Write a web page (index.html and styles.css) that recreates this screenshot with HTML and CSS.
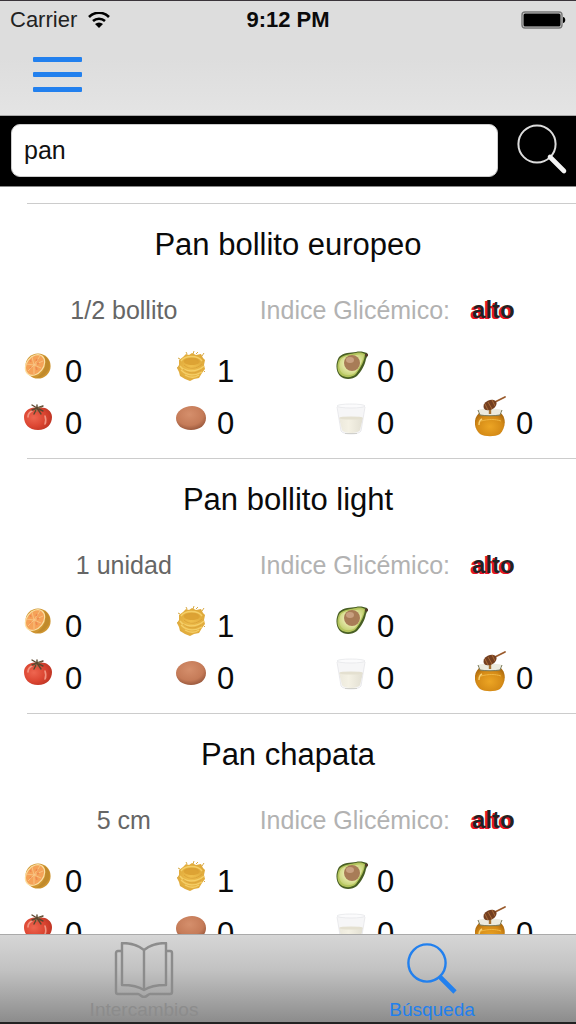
FILE: index.html
```html
<!DOCTYPE html>
<html lang="es">
<head>
    <meta charset="UTF-8">
    <meta name="viewport" content="width=device-width, initial-scale=1.0">
    <title>Búsqueda</title>
    <link rel="stylesheet" href="styles.css">
</head>
<body>

  <!-- Food icons, used by every row -->
  <svg class="sprite" aria-hidden="true">
    <defs>
      <radialGradient id="tomatoFill" cx="35%" cy="45%" r="65%">
        <stop offset="0" stop-color="#ee6650"/>
        <stop offset="0.6" stop-color="#dc4632"/>
        <stop offset="1" stop-color="#c03524"/>
      </radialGradient>
      <radialGradient id="eggFill" cx="45%" cy="35%" r="65%">
        <stop offset="0" stop-color="#d58f6c"/>
        <stop offset="0.7" stop-color="#c57b58"/>
        <stop offset="1" stop-color="#9c5a3e"/>
      </radialGradient>
      <radialGradient id="pastaFill" cx="50%" cy="50%" r="55%">
        <stop offset="0" stop-color="#f0bf4c"/>
        <stop offset="1" stop-color="#dea83a"/>
      </radialGradient>
      <radialGradient id="fleshFill" cx="50%" cy="45%" r="60%">
        <stop offset="0.4" stop-color="#eeedb4"/>
        <stop offset="1" stop-color="#c3d072"/>
      </radialGradient>
      <radialGradient id="honeyFill" cx="50%" cy="60%" r="60%">
        <stop offset="0" stop-color="#eca524"/>
        <stop offset="0.7" stop-color="#d58b17"/>
        <stop offset="1" stop-color="#ae6c10"/>
      </radialGradient>
      <linearGradient id="milkFill" x1="0" y1="0" x2="1" y2="0">
        <stop offset="0" stop-color="#ece9dc"/>
        <stop offset="0.4" stop-color="#f4f1e4"/>
        <stop offset="1" stop-color="#e2dfd2"/>
      </linearGradient>
    </defs>

    <symbol id="orange" viewBox="0 0 32 32">
      <circle cx="14" cy="15" r="12.6" fill="#cf9530"/>
      <path d="M20 5c6 3 8 11 3 16-3 4-7 6-11 6 8-5 12-13 8-22z" fill="#c08a2c"/>
      <ellipse cx="11" cy="14" rx="9" ry="12" transform="rotate(38 11 14)" fill="#fbdfa2"/>
      <ellipse cx="11" cy="14" rx="7.8" ry="10.8" transform="rotate(38 11 14)" fill="#f5a258"/>
      <path d="M10 14l6-9M10 14l9-4M10 14l7 3M10 14v9M10 14l-6 6M10 14l-8-1M10 14L8 6" stroke="#f9c98a" stroke-width="0.8" fill="none"/>
      <path d="M6 9l1 2M13 8l-1 2M6 17l1-1M13 19l-1-3M15 12l-2 1" stroke="#ee8a50" stroke-width="1.6"/>
    </symbol>

    <symbol id="tomato" viewBox="0 0 32 32">
      <path d="M14 5c5-2 14 1 14 9 0 7-5 13-14 13S0 21 0 14C0 7 8 3 14 5z" fill="url(#tomatoFill)"/>
      <path d="M4 14c0-3 2-5 4-6M21 13c1 3 1 6 0 8" stroke="#f29582" stroke-width="1.6" fill="none" stroke-linecap="round"/>
      <path d="M13 5L8 7M13 5l-3 6M13 5l4 6M13 5l6 3M13 5L8 2M13 5l6-2M13 5V2" stroke="#5c4830" stroke-width="1.4" fill="none" stroke-linecap="round"/>
      <path d="M12 6l1 3M14 5l4-1" stroke="#8f7f55" stroke-width="0.8" fill="none"/>
    </symbol>

    <symbol id="pasta" viewBox="0 0 32 32">
      <path d="M3 9l4-3 3-3 3 1 3-2 4 2 5-1 2 4 2 2-1 5 1 4-3 4-3 5-5 1-4 2-5-2-5-3-1-4-2-4 2-3z" fill="url(#pastaFill)"/>
      <path d="M8 9c4-3 12-3 15 0s-3 5-7 5-10-2-8-5z" fill="#dda334"/>
      <path d="M5 10c4-6 17-6 21 0M4 15c4 6 16 7 24 0M5 19c6 6 14 6 21 2M9 24c5 3 10 3 14 0" stroke="#f5cf68" stroke-width="1.4" fill="none"/>
      <path d="M9 10c4-3 10-3 13 0M8 14c5 5 13 4 18-1M7 18c6 5 12 5 18 1" stroke="#d89f36" stroke-width="0.8" fill="none"/>
      <path d="M4 8L2 7M11 3l-1-2M17 3l1-3M20 3l2-2M26 5l2-3M28 20l1 1M3 16l-2 1M6 24l-1 1" stroke="#d8aa45" fill="none"/>
    </symbol>

    <symbol id="egg" viewBox="0 0 32 32">
      <path d="M0 15C0 8 8 3 16 3s14 5 14 12-6 12-15 12S0 22 0 15z" fill="url(#eggFill)"/>
    </symbol>

    <symbol id="avocado" viewBox="0 0 32 32">
      <path d="M3 6c5-5 11-4 17-5 4-1 8 0 11 1 1 2 0 4-1 6-1 6-5 13-9 17-5 4-13 4-17 0S-1 13 3 6z" fill="#485e24"/>
      <path d="M4 7c5-4 11-4 16-5 4-1 7 0 9 1 0 5-4 14-9 20-4 4-11 4-15 1S0 13 4 7z" fill="#b3c45c"/>
      <path d="M5 8c5-4 10-3 15-4 3-1 6-1 8 0-1 5-4 12-9 18-4 3-10 3-13 0S2 13 5 8z" fill="url(#fleshFill)"/>
      <circle cx="16" cy="12" r="8" fill="#a87c57"/>
      <ellipse cx="14" cy="9" rx="4" ry="3" fill="#c8a080"/>
      <circle cx="30.5" cy="4" r="1.6" fill="#55392b"/>
    </symbol>

    <symbol id="milk" viewBox="0 0 32 32">
      <path d="M1 3l4 25c2 4 18 4 20 0l4-25z" fill="#f6f6f7"/>
      <path d="M3 15l3 12c2 4 16 4 18 0l3-12z" fill="url(#milkFill)"/>
      <ellipse cx="15" cy="15" rx="12" ry="1.6" fill="#e4e0d0"/>
      <ellipse cx="15" cy="3" rx="14" ry="2" fill="#fbfbfc" stroke="#e6e7ea" stroke-width="0.8"/>
      <path d="M1 4l4 24c2 4 18 4 20 0l4-24" fill="none" stroke="#e4e5e8" stroke-width="0.8"/>
      <path d="M9 30.5h12" stroke="#d0d0cc"/>
    </symbol>

    <symbol id="honey" viewBox="0 0 32 44">
      <path d="M6 17h18c8 4 7 16 1 22-5 3-15 3-20 0-7-6-7-18 1-22z" fill="url(#honeyFill)"/>
      <path d="M3 15c6-2 18-2 24 0l-2 5c-6 1-14 1-20 0z" fill="#eceade"/>
      <path d="M3 15c1 2 1 3 2 5 6 1 14 1 20 0 1-2 1-3 2-5" fill="none" stroke="#787a5c"/>
      <path d="M6 26c8-2 14-2 20 0" stroke="#f0b744" fill="none"/>
      <path d="M4 30c0-3 1-5 3-6" stroke="#f8d277" stroke-width="1.4" fill="none"/>
      <path d="M15 13v6" stroke="#a77232" stroke-width="2.4"/>
      <path d="M20 7l10-5" stroke="#9a5a2c" stroke-width="1.8" stroke-linecap="round"/>
      <ellipse cx="15" cy="10" rx="7" ry="4.8" transform="rotate(-28 15 10)" fill="#743f20"/>
      <path d="M10 9l3 6M13 7l4 7M17 5l3 6" stroke="#b5763e" stroke-width="0.8"/>
    </symbol>
  </svg>

    <div class="header">
        <div class="status">
            <div class="carrier">
                <span>Carrier</span>
                <svg class="wifi" viewBox="0 0 22 16" aria-hidden="true">
                    <path d="M1 5a14 14 0 0 1 20 0M5 9a9 9 0 0 1 12 0" fill="none" stroke="#000" stroke-width="2.6"/>
                    <path d="M7 12a6 6 0 0 1 8 0l-4 4z"/>
                </svg>
            </div>
            <div class="clock">9:12 PM</div>
            <svg class="battery" viewBox="0 0 45 18" aria-hidden="true">
                <rect x="1" y="1" width="40" height="16" rx="3" fill="#ddd" stroke="#777" stroke-width="1.4"/>
                <rect x="2.5" y="2.5" width="37" height="13" rx="1.5"/>
                <path d="M42 6c3 0 3 6 0 6z"/>
            </svg>
        </div>
        <button class="menu" type="button" aria-label="Menú">
            <span></span>
            <span></span>
            <span></span>
        </button>
    </div>

    <form class="search">
        <input type="text" value="pan" aria-label="Buscar alimento">
        <button type="button" aria-label="Buscar">
            <svg viewBox="0 0 52 52" fill="none" aria-hidden="true">
                <circle cx="21" cy="20" r="18.6" stroke="#dcdcdc" stroke-width="2"/>
                <path d="M34 33L48 47" stroke="#f4f4f4" stroke-width="4.6" stroke-linecap="round"/>
            </svg>
        </button>
    </form>

    <div class="results">
        <div class="food">
            <h2>Pan bollito europeo</h2>
            <div class="info">
                <span class="portion">1/2 bollito</span>
                <span class="label">Indice Glicémico:</span>
                <span class="level">alto</span>
            </div>
            <div class="counts">
                <div class="count"><svg role="img" aria-label="Fruta"><use href="#orange"/></svg><span>0</span></div>
                <div class="count"><svg role="img" aria-label="Harina"><use href="#pasta"/></svg><span>1</span></div>
                <div class="count"><svg role="img" aria-label="Grasa"><use href="#avocado"/></svg><span>0</span></div>
                <div></div>
                <div class="count"><svg role="img" aria-label="Vegetal"><use href="#tomato"/></svg><span>0</span></div>
                <div class="count"><svg role="img" aria-label="Carne"><use href="#egg"/></svg><span>0</span></div>
                <div class="count"><svg role="img" aria-label="Leche"><use href="#milk"/></svg><span>0</span></div>
                <div class="count tall"><svg role="img" aria-label="Azúcar"><use href="#honey"/></svg><span>0</span></div>
            </div>
        </div>

        <div class="food">
            <h2>Pan bollito light</h2>
            <div class="info">
                <span class="portion">1 unidad</span>
                <span class="label">Indice Glicémico:</span>
                <span class="level">alto</span>
            </div>
            <div class="counts">
                <div class="count"><svg role="img" aria-label="Fruta"><use href="#orange"/></svg><span>0</span></div>
                <div class="count"><svg role="img" aria-label="Harina"><use href="#pasta"/></svg><span>1</span></div>
                <div class="count"><svg role="img" aria-label="Grasa"><use href="#avocado"/></svg><span>0</span></div>
                <div></div>
                <div class="count"><svg role="img" aria-label="Vegetal"><use href="#tomato"/></svg><span>0</span></div>
                <div class="count"><svg role="img" aria-label="Carne"><use href="#egg"/></svg><span>0</span></div>
                <div class="count"><svg role="img" aria-label="Leche"><use href="#milk"/></svg><span>0</span></div>
                <div class="count tall"><svg role="img" aria-label="Azúcar"><use href="#honey"/></svg><span>0</span></div>
            </div>
        </div>

        <div class="food">
            <h2>Pan chapata</h2>
            <div class="info">
                <span class="portion">5 cm</span>
                <span class="label">Indice Glicémico:</span>
                <span class="level">alto</span>
            </div>
            <div class="counts">
                <div class="count"><svg role="img" aria-label="Fruta"><use href="#orange"/></svg><span>0</span></div>
                <div class="count"><svg role="img" aria-label="Harina"><use href="#pasta"/></svg><span>1</span></div>
                <div class="count"><svg role="img" aria-label="Grasa"><use href="#avocado"/></svg><span>0</span></div>
                <div></div>
                <div class="count"><svg role="img" aria-label="Vegetal"><use href="#tomato"/></svg><span>0</span></div>
                <div class="count"><svg role="img" aria-label="Carne"><use href="#egg"/></svg><span>0</span></div>
                <div class="count"><svg role="img" aria-label="Leche"><use href="#milk"/></svg><span>0</span></div>
                <div class="count tall"><svg role="img" aria-label="Azúcar"><use href="#honey"/></svg><span>0</span></div>
            </div>
        </div>
    </div>

    <nav class="tabs">
        <a href="#intercambios">
            <svg viewBox="0 0 60 56" fill="none" stroke="currentColor" stroke-width="2.4" stroke-linejoin="round" aria-hidden="true">
                <path d="M30 8C24 3 16 1 8 1v42c8 0 16 1 22 5 6-4 14-5 22-5V1c-8 0-16 2-22 7zM30 8v40"/>
                <path d="M8 9H4q-2 0-2 2v39q0 2 2 2h20c2 0 3 3 6 3s4-3 6-3h20q2 0 2-2V11q0-2-2-2h-4"/>
            </svg>
            <span>Intercambios</span>
        </a>
        <a href="#busqueda" class="active">
            <svg viewBox="0 0 60 56" fill="none" stroke="currentColor" aria-hidden="true">
                <circle cx="25" cy="21" r="18.6" stroke-width="2.4"/>
                <path d="M38 35l15 15" stroke-width="4.6"/>
            </svg>
            <span>Búsqueda</span>
        </a>
    </nav>

</body>
</html>
```
FILE: styles.css
```css
* {
    box-sizing: border-box;
}

body {
    margin: 0;
    height: 100vh;
    display: flex;
    flex-direction: column;
    overflow: hidden;
    font-family: "Liberation Sans", Arial, sans-serif;
    background-color: white;
    color: #0a0a0a;
}

button {
    border: 0;
    padding: 0;
    background: none;
}

.sprite {
    position: absolute;
    width: 0;
    height: 0;
}

.header {
    flex: none;
    height: 116px;
    border-top: 1px solid #3a343a;
    border-bottom: 1px solid #aaa;
    background: linear-gradient(#dddddd 50%, #e4e4e4);
}

/* STATUS BAR */
.status {
    display: grid;
    grid-template-columns: 1fr auto 1fr;
    align-items: center;
    height: 38px;
    padding: 0 10px;
    font-size: 22px;
}

.carrier {
    display: flex;
    align-items: center;
    gap: 11px;
    color: #222;
}

.wifi {
    width: 22px;
    height: 16px;
}

.clock {
    font-weight: bold;
}

.battery {
    width: 45px;
    height: 18px;
    justify-self: end;
}

.menu {
    display: flex;
    flex-direction: column;
    gap: 10px;
    margin: 18px 33px;
}

.menu span {
    width: 49px;
    height: 5px;
    border-radius: 1px;
    background-color: #2280ee;
}

/* SEARCH BAR */
.search {
    flex: none;
    display: flex;
    align-items: center;
    gap: 18px;
    height: 71px;
    padding: 0 8px 2px 11px;
    border-bottom: 1px solid #888;
    background-color: black;
}

.search input {
    flex: 1;
    min-width: 0;
    height: 53px;
    padding: 0 12px;
    border: 1px solid #ccc;
    border-radius: 9px;
    background-color: white;
    color: #111;
    font-family: inherit;
    font-size: 25px;
}

.search button,
.search svg {
    display: block;
    width: 52px;
    height: 52px;
}

/* RESULTS */
.results {
    flex: 1;
    min-height: 0;
    overflow-y: auto;
    scrollbar-width: none;
    padding-top: 16px;
}

.food {
    height: 255px;
    display: flow-root;
}

.food::before {
    content: "";
    display: block;
    height: 1px;
    margin-left: 27px;
    background-color: #ccc;
}

.food h2 {
    margin: 23px 0 0;
    text-align: center;
    font-size: 31px;
    font-weight: normal;
    line-height: 36px;
}

.info {
    display: flex;
    align-items: center;
    height: 30px;
    margin-top: 32px;
    font-size: 25px;
}

.portion {
    width: 43%;
    text-align: center;
    color: #666;
}

.label {
    padding-left: 12px;
    color: #b2b2b2;
}

.level {
    margin-left: 22px;
    font-size: 24px;
    font-weight: bold;
    color: #222;
    text-shadow: -1px 1px #e81224, -2px 1px #e81224;
}

.counts {
    display: grid;
    grid-template-columns: 152fr 160fr 139fr 101fr;
    grid-auto-rows: 52px;
    margin-top: 21px;
    padding-left: 24px;
}

.count {
    display: flex;
    gap: 9px;
    font-size: 31px;
    line-height: 52px;
}

.count svg {
    width: 32px;
    height: 32px;
    margin-top: 5px;
}

.count.tall svg {
    height: 44px;
    margin-top: -3px;
}

/* TAB BAR */
.tabs {
    flex: none;
    display: flex;
    height: 90px;
    border-top: 1px solid #aaa;
    border-bottom: 2px solid #222;
    background: linear-gradient(#d6d6d6, #c2c2c2 40%, #8c8c8c);
}

.tabs a {
    flex: 1;
    display: flex;
    flex-direction: column;
    align-items: center;
    padding-top: 7px;
    color: #8c8c8c;
    font-size: 19px;
    line-height: 24px;
    text-decoration: none;
}

.tabs svg {
    flex: none;
    width: 60px;
    height: 56px;
}

.tabs .active {
    color: #2280ee;
}
```
